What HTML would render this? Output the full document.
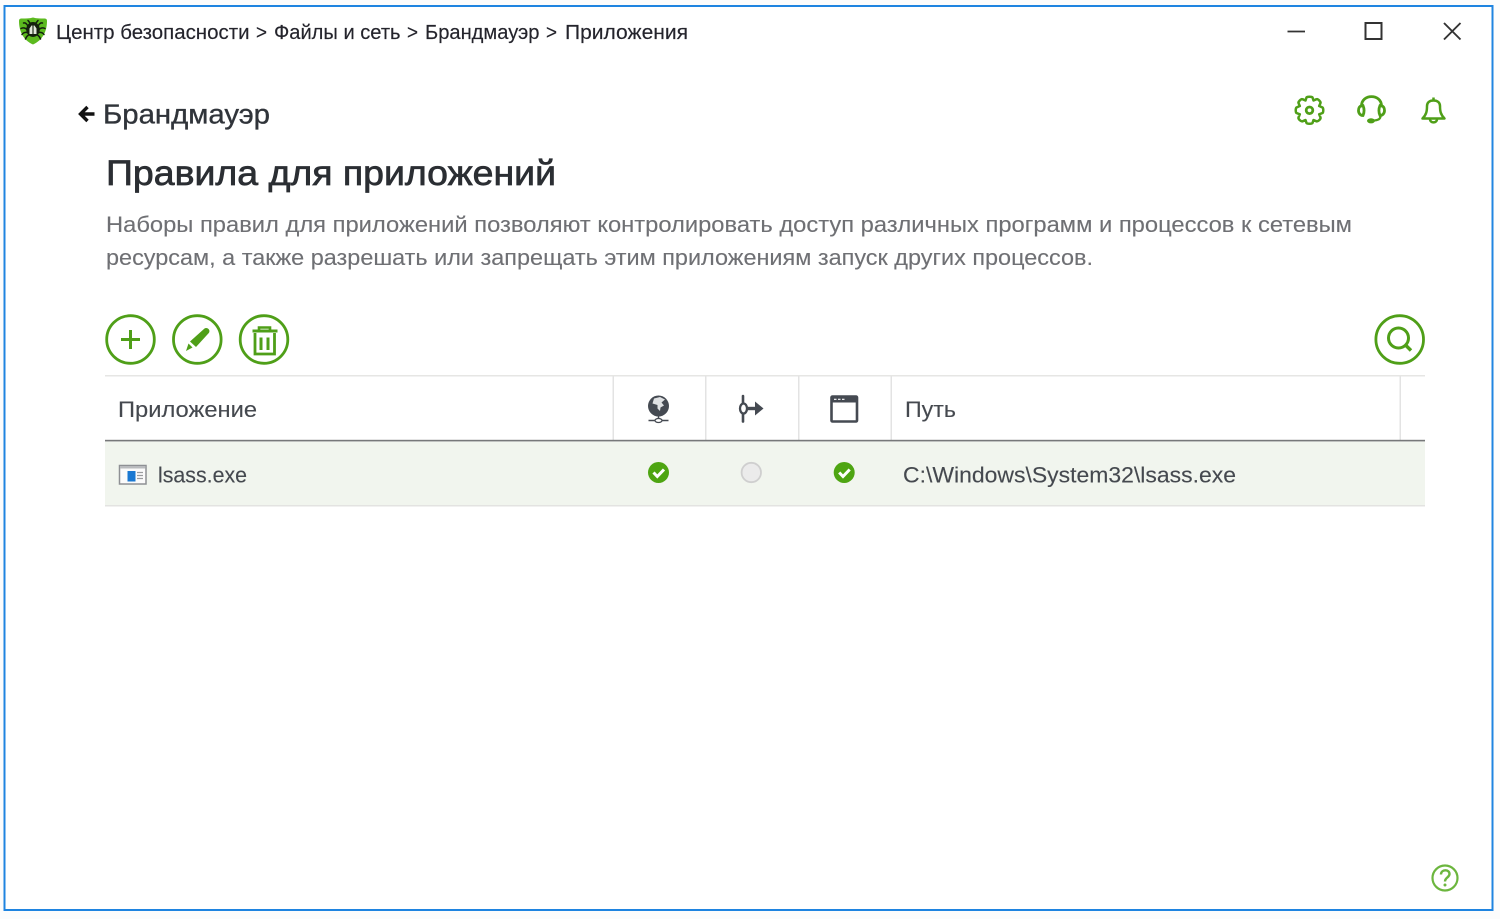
<!DOCTYPE html>
<html lang="ru"><head><meta charset="utf-8"><title>Приложения</title>
<style>
html,body{margin:0;padding:0;background:#fff;width:1500px;height:919px;overflow:hidden}
svg{display:block;position:absolute;left:0;top:0;filter:blur(.35px)}
text{font-family:"Liberation Sans",sans-serif}
</style></head><body>
<svg width="1500" height="919" viewBox="0 0 1500 919" xmlns="http://www.w3.org/2000/svg">
<rect x="0" y="0" width="1500" height="919" fill="#fcfcfc"/>
<rect x="4.5" y="6" width="1488" height="904" fill="#fff" stroke="#1f84e0" stroke-width="2"/>

<!-- logo -->
<path d="M19 21C19 19 20 18.500 22 18.500C26 18.500 29.500 18.500 33 17.500C36.500 18.500 40 18.500 44 18.500C46 18.500 47 19 47 21C47 31 43 40 33 44.500C23 40 19 31 19 21Z" fill="#5cba1f"/>
<g stroke="#14210e" stroke-width="1.500" fill="none" stroke-linecap="round">
<path d="M28 26C26 23 25 22.500 23.500 23M38 26C40 23 41 22.500 42.500 23M27 29.500C25 27.500 23 27.500 21 28.500M39 29.500C41 27.500 43 27.500 45 28.500M27 32.500C25 32 23 33 22 34.500M39 32.500C41 32 43 33 44 34.500M28.500 35C27 36 26 37.500 25.500 39M37.500 35C39 36 40 37.500 40.500 39M30 23L28 20.500M36 23L38 20.500"/>
</g>
<ellipse cx="33" cy="29.500" rx="6.800" ry="7.500" fill="#14210e"/>
<path d="M29.500 34V28.500L31.500 25.500H34.500L36.500 28.500V34Z" fill="#e2e8dc"/>
<path d="M33 25.500V34" stroke="#14210e" stroke-width="1.100"/>

<!-- breadcrumb -->
<g font-size="20" fill="#24242c" stroke="#24242c" stroke-width=".15">
<text x="56" y="39" textLength="193.500" lengthAdjust="spacingAndGlyphs">Центр безопасности</text>
<text x="256" y="39" textLength="11" lengthAdjust="spacingAndGlyphs">&gt;</text>
<text x="274" y="39" textLength="126.500" lengthAdjust="spacingAndGlyphs">Файлы и сеть</text>
<text x="407" y="39" textLength="11" lengthAdjust="spacingAndGlyphs">&gt;</text>
<text x="425" y="39" textLength="114.500" lengthAdjust="spacingAndGlyphs">Брандмауэр</text>
<text x="546" y="39" textLength="11" lengthAdjust="spacingAndGlyphs">&gt;</text>
<text x="565" y="39" textLength="123" lengthAdjust="spacingAndGlyphs">Приложения</text>
</g>

<!-- window controls -->
<path d="M1287.500 31.500H1305" stroke="#333" stroke-width="1.800"/>
<rect x="1365.500" y="23" width="16" height="16" fill="none" stroke="#333" stroke-width="2"/>
<path d="M1444 23L1460.500 39.500M1460.500 23L1444 39.500" stroke="#333" stroke-width="1.900"/>

<!-- back -->
<path d="M94.500 114H81M87.500 107L80.500 114L87.500 121" fill="none" stroke="#111" stroke-width="3.400"/>
<text x="103" y="123.500" font-size="28" fill="#30343a" stroke="#30343a" stroke-width=".35" textLength="167" lengthAdjust="spacingAndGlyphs">Брандмауэр</text>

<!-- gear -->
<g fill="none" stroke="#4f9f18" stroke-width="2.500" stroke-linejoin="round">
<path d="M1306.500 97.500C1306.500 96.500 1312.500 96.500 1312.500 97.500L1313.500 100.500L1316.500 99.200C1318 98.500 1321 102 1320.500 103L1319.200 106L1322.500 107.500C1323.500 108 1323.500 112.500 1322.500 113L1319.200 114.300L1320.500 117.500C1321 119 1318 121.800 1316.500 121.300L1313.500 120L1312.500 123C1312 124 1307 124 1306.500 123L1305.500 120L1302.500 121.300C1301 121.800 1298 119 1298.500 117.500L1299.800 114.300L1296.500 113C1295.500 112.500 1295.500 108 1296.500 107.500L1299.800 106L1298.500 103C1298 102 1301 98.500 1302.500 99.200L1305.500 100.500Z"/>
<circle cx="1309.500" cy="110.300" r="3.300" stroke-width="2.800"/>
</g>
<!-- headset -->
<g fill="none" stroke="#4f9f18" stroke-width="2.800" stroke-linecap="round">
<path d="M1361.500 106C1361.500 93.500 1381.500 93.500 1381.500 106"/>
<path d="M1363 105.500C1359.500 105.500 1358.500 108 1358.500 110.500C1358.500 113.500 1360.500 115.500 1363 115.500C1364.500 112 1364.500 109 1363 105.500Z"/>
<path d="M1380 105.500C1383.500 105.500 1384.500 108 1384.500 110.500C1384.500 113.500 1382.500 115.500 1380 115.500C1378.500 112 1378.500 109 1380 105.500Z"/>
<path d="M1380.500 116C1380.500 120 1376 120.500 1373 120.500" stroke-width="2.200"/>
</g>
<ellipse cx="1371" cy="120.800" rx="4" ry="2.600" fill="#4f9f18"/>
<!-- bell -->
<g fill="none" stroke="#4f9f18" stroke-width="2.500" stroke-linejoin="round">
<path d="M1422.500 118.500C1426.500 114.500 1427 111 1427 106C1427 102.500 1429.500 100.500 1433.500 100.500C1437.500 100.500 1440 102.500 1440 106C1440 111 1440.500 114.500 1444.500 118.500Z"/>
<path d="M1433.500 100V97.500"/>
<path d="M1430 119C1430 123.500 1437 123.500 1437 119"/>
</g>

<!-- title -->
<text x="106" y="185" font-size="35" fill="#2b2e33" stroke="#2b2e33" stroke-width=".7" textLength="450" lengthAdjust="spacingAndGlyphs">Правила для приложений</text>
<text x="106" y="232" font-size="22.500" fill="#6f7074" stroke="#6f7074" stroke-width=".12" textLength="1246" lengthAdjust="spacingAndGlyphs">Наборы правил для приложений позволяют контролировать доступ различных программ и процессов к сетевым</text>
<text x="106" y="265" font-size="22.500" fill="#6f7074" stroke="#6f7074" stroke-width=".12" textLength="987" lengthAdjust="spacingAndGlyphs">ресурсам, а также разрешать или запрещать этим приложениям запуск других процессов.</text>

<!-- toolbar -->
<g fill="none" stroke="#4f9f18" stroke-width="2.800">
<circle cx="130.500" cy="339.500" r="23.800"/>
<circle cx="197.300" cy="339.500" r="23.800"/>
<circle cx="264" cy="339.500" r="23.800"/>
<circle cx="1399.700" cy="339.500" r="23.800"/>
<path d="M130.500 330V349M121 339.500H140" stroke-width="3"/>
<circle cx="1398.500" cy="338" r="10" stroke-width="3"/>
<path d="M1405.500 345L1411 350.500" stroke-width="3.400"/>
</g>
<path d="M204.500 328.500C206 327.500 207.500 328 208.500 329C209.500 330 209.800 331.500 208.800 333L196 347L190 341.500Z" fill="#4f9f18"/>
<path d="M188.500 343.500L192.500 347.500L186 351Z" fill="#4f9f18"/>
<g fill="none" stroke="#4f9f18" stroke-width="2.600">
<path d="M252.500 331H277.500" stroke-width="3"/>
<path d="M259 331V327.500H270V331"/>
<path d="M255 333V354H274.500V333" stroke-width="2.800"/>
<path d="M261 337.500V350M268 337.500V350" stroke-width="3"/>
</g>

<!-- table -->
<rect x="105" y="441" width="1320" height="64" fill="#f1f5ee"/>
<rect x="105" y="375" width="1320" height="1.500" fill="#e6e6e4"/>
<g fill="#e3e3e3">
<rect x="612.500" y="376" width="1.500" height="64"/>
<rect x="705" y="376" width="1.500" height="64"/>
<rect x="798" y="376" width="1.500" height="64"/>
<rect x="890.500" y="376" width="1.500" height="64"/>
<rect x="1399.500" y="376" width="1.500" height="64"/>
</g>
<rect x="105" y="439.800" width="1320" height="1.600" fill="#77787a"/>
<rect x="105" y="505" width="1320" height="1.500" fill="#e3e3e1"/>

<g font-size="22.500" fill="#45494f" stroke="#45494f" stroke-width=".12">
<text x="118" y="417" textLength="139" lengthAdjust="spacingAndGlyphs">Приложение</text>
<text x="905" y="417" textLength="51" lengthAdjust="spacingAndGlyphs">Путь</text>
<text x="158" y="482.500" textLength="89" lengthAdjust="spacingAndGlyphs">lsass.exe</text>
<text x="903" y="482.500" textLength="333" lengthAdjust="spacingAndGlyphs">C:\Windows\System32\lsass.exe</text>
</g>

<!-- globe -->
<circle cx="658.500" cy="406" r="10.500" fill="#454a52"/>
<path d="M654 398.500L660 397L665 399.500L661.500 402.500L664 405.500L660.500 407.500L660 411L657.500 408.500L657.500 405L652.500 403.500Z" fill="#dfe1e3"/>
<path d="M658.500 416.500V419M648.500 420.500H655M662 420.500H668.500" stroke="#454a52" stroke-width="1.500"/>
<ellipse cx="658.500" cy="420.500" rx="3.500" ry="2" fill="none" stroke="#454a52" stroke-width="1.300"/>
<!-- connection arrow -->
<path d="M743 396V421.500" stroke="#454a52" stroke-width="2.600" stroke-linecap="round"/>
<ellipse cx="743.500" cy="408.500" rx="3.500" ry="5" fill="#fff" stroke="#454a52" stroke-width="2.300"/>
<path d="M746 408.500H756" stroke="#454a52" stroke-width="3.400"/>
<path d="M755 401.500L763.500 408.500L755 415.500Z" fill="#454a52"/>
<!-- window icon -->
<rect x="831.500" y="396.500" width="25.500" height="25" rx="1" fill="#fff" stroke="#454a52" stroke-width="2.600"/>
<rect x="831" y="396" width="26.500" height="6.500" fill="#454a52"/>
<path d="M834 399.300H836.500M838 399.300H840.500M842 399.300H844.500" stroke="#fff" stroke-width="1.200"/>

<!-- app icon -->
<rect x="119.500" y="465.500" width="26.500" height="18.500" fill="#fbfbfb" stroke="#8e9094" stroke-width="1.500"/>
<rect x="120" y="466" width="25.500" height="2.500" fill="#b9bbbe"/>
<rect x="127.500" y="471" width="8" height="10.500" fill="#1a78d2"/>
<path d="M137 472.500H143M137 475.500H143M137 478.500H143" stroke="#9a9c9e" stroke-width="1.300"/>

<!-- status -->
<circle cx="658.500" cy="472.500" r="10.500" fill="#4ea512"/>
<path d="M653.500 472.500L657.300 476.500L664 469.500" fill="none" stroke="#fff" stroke-width="3"/>
<circle cx="751.300" cy="472.500" r="9.700" fill="#ebebeb" stroke="#cfcfcf" stroke-width="1.800"/>
<circle cx="844.200" cy="472.500" r="10.500" fill="#4ea512"/>
<path d="M839.200 472.500L843 476.500L849.700 469.500" fill="none" stroke="#fff" stroke-width="3"/>

<!-- help -->
<circle cx="1445" cy="878" r="12.500" fill="none" stroke="#6cb63e" stroke-width="2.200"/>
<path d="M1441 874.500C1441 869 1449.500 869 1449.500 874C1449.500 877.500 1445 877.500 1445 881.500" fill="none" stroke="#6cb63e" stroke-width="2.400"/>
<circle cx="1445" cy="885" r="1.500" fill="#6cb63e"/>
</svg>
</body></html>
